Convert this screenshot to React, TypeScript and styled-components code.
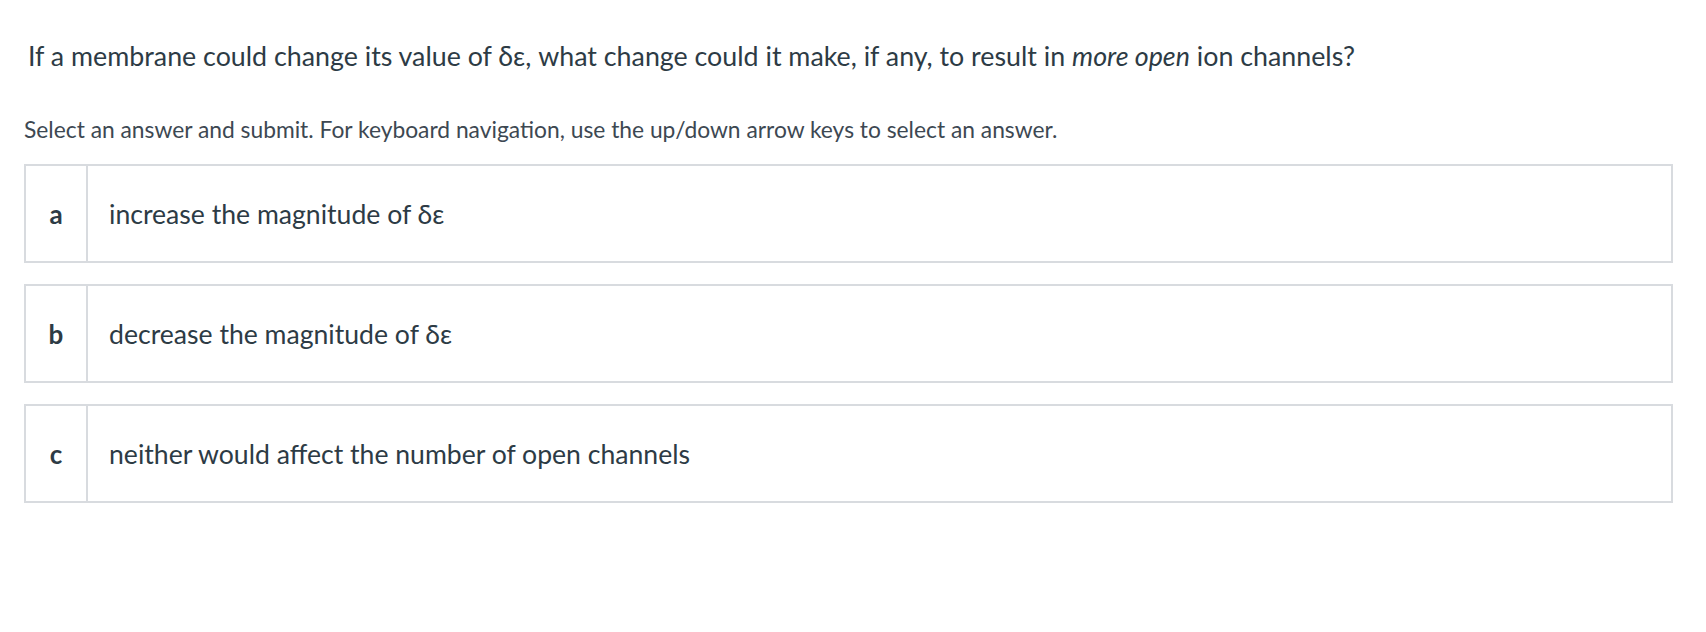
import React from 'react'
import styled, { createGlobalStyle } from 'styled-components'

const GlobalStyle = createGlobalStyle`
  body {
    margin: 0;
    background: #ffffff;
    font-family: "Lato", "Noto Sans", sans-serif;
    color: #2d3b45;
  }
`

const Page = styled.main`
  padding: 39px 33px 0 24px;
`

const Question = styled.h1`
  margin: 0 0 0 4px;
  font-size: 26.8px;
  font-weight: 400;
  line-height: 34px;
  color: #2d3b45;
  em {
    font-style: italic;
  }
`

const Hint = styled.p`
  margin: 42px 0 0 0;
  font-size: 22.8px;
  line-height: 28px;
  color: #3d4852;
`

const AnswerList = styled.ul`
  list-style: none;
  margin: 21px 0 0 0;
  padding: 0;
  display: flex;
  flex-direction: column;
  gap: 21px;
`

const Answer = styled.li`
  display: grid;
  grid-template-columns: 62px 1fr;
  height: 99px;
  box-sizing: border-box;
  border: 2px solid #d8dbdf;
  cursor: pointer;
`

const Letter = styled.span`
  display: flex;
  align-items: center;
  justify-content: center;
  border-right: 2px solid #d8dbdf;
  font-size: 26px;
  font-weight: 700;
  color: #2d3b45;
`

const AnswerText = styled.span`
  display: flex;
  align-items: center;
  padding-left: 21px;
  font-size: 26.6px;
  color: #2d3b45;
`

const answers = [
  { letter: 'a', text: 'increase the magnitude of δε' },
  { letter: 'b', text: 'decrease the magnitude of δε' },
  { letter: 'c', text: 'neither would affect the number of open channels' },
]

export default function App() {
  return (
    <>
      <GlobalStyle />
      <Page>
        <Question>
          If a membrane could change its value of δε, what change could it make, if any, to result in <em>more open</em> ion channels?
        </Question>
        <Hint>
          Select an answer and submit. For keyboard navigation, use the up/down arrow keys to select an answer.
        </Hint>
        <AnswerList>
          {answers.map((a) => (
            <Answer key={a.letter}>
              <Letter>{a.letter}</Letter>
              <AnswerText>{a.text}</AnswerText>
            </Answer>
          ))}
        </AnswerList>
      </Page>
    </>
  )
}
